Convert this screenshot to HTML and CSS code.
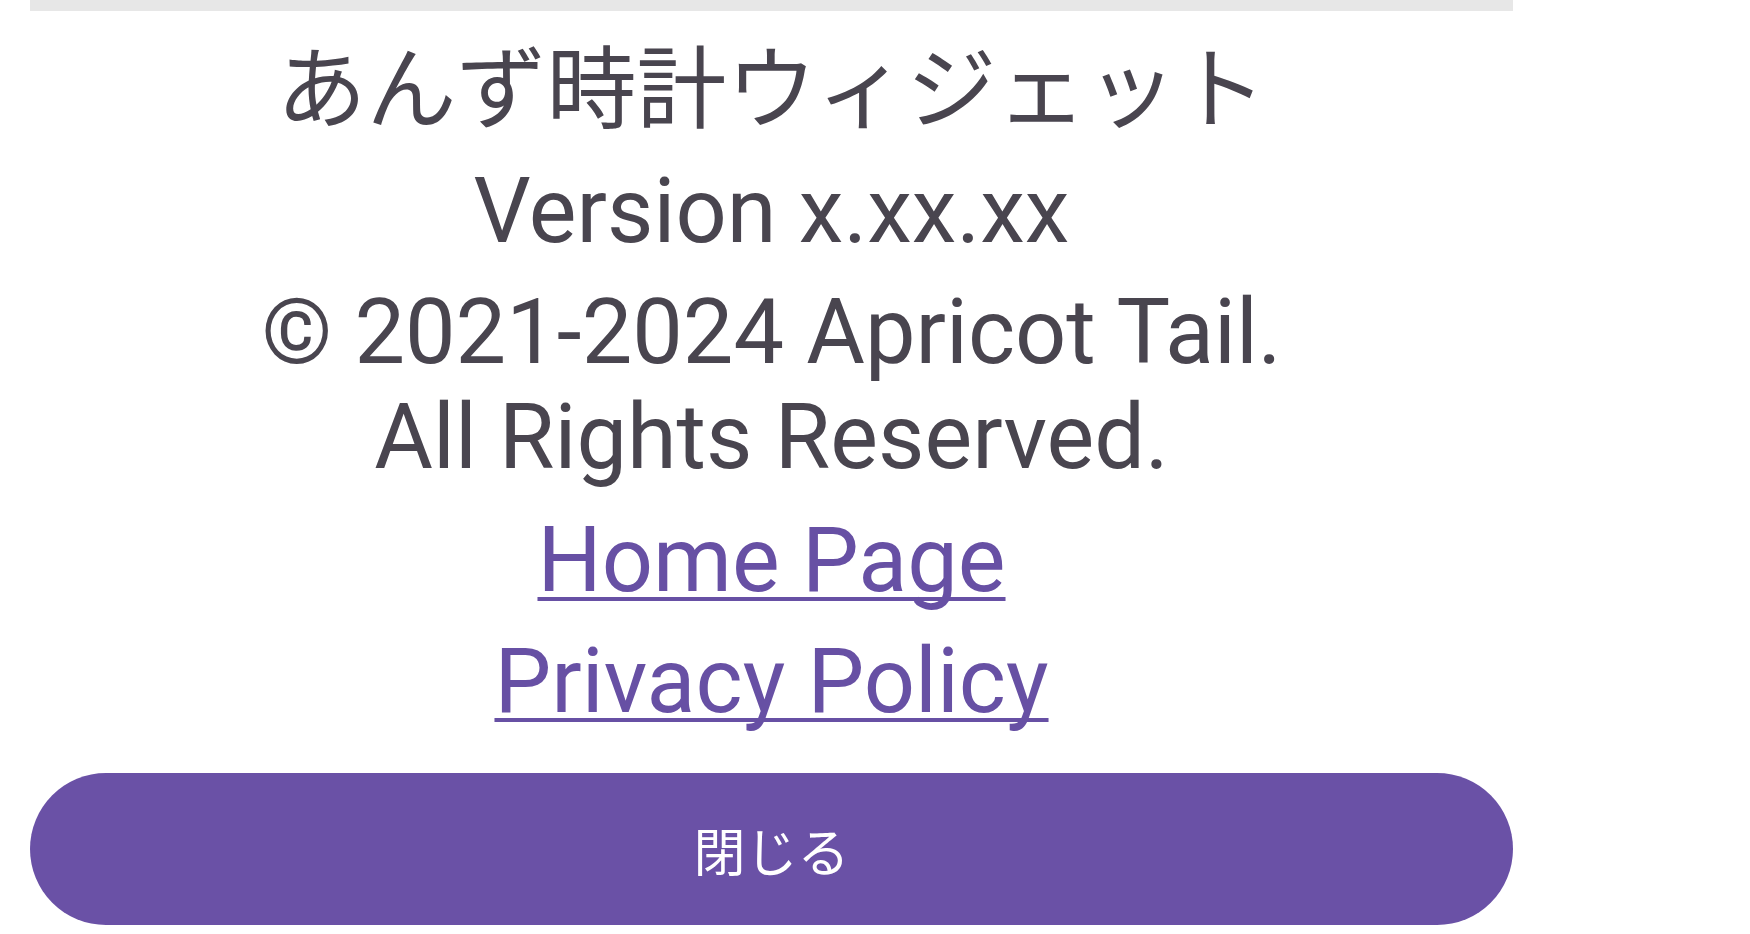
FILE: index.html
```html
<!DOCTYPE html>
<html lang="ja">
<head>
  <meta charset="UTF-8">
  <title>あんず時計ウィジェット</title>
  <link rel="stylesheet" href="styles.css">
</head>
<body>

  <div class="about-dialog">
    <div class="top-divider"></div>

    <h1 class="app-name">あんず時計ウィジェット</h1>
    <p class="version">Version x.xx.xx</p>
    <p class="copyright">© 2021-2024 Apricot Tail.<br>All Rights Reserved.</p>

    <a class="link home-link" href="#">Home Page</a>
    <a class="link policy-link" href="#">Privacy Policy</a>

    <button class="close-button">閉じる</button>
  </div>

</body>
</html>
```

FILE: styles.css
```css
body {
  margin: 0;
  background: #fff;
  font-family: Roboto, "Noto Sans", "Noto Sans CJK JP", sans-serif;
  color: #49454f;
}

.about-dialog {
  width: 1483px;
  margin-left: 30px;
  display: flex;
  flex-direction: column;
  align-items: center;
  text-align: center;
}

.top-divider {
  align-self: stretch;
  height: 11px;
  background: #e7e7e7;
}

.app-name {
  margin: 19px 0 0;
  font-family: "Noto Sans CJK JP", sans-serif;
  font-weight: 400;
  font-size: 90px;
  line-height: 105px;
}

.version,
.copyright {
  margin: 0;
  font-size: 90px;
  line-height: 105px;
}

.version {
  margin-top: 24px;
}

.copyright {
  margin-top: 16px;
}

.link {
  font-size: 90px;
  line-height: 105px;
  color: #6750a4;
  text-decoration: underline;
  text-decoration-thickness: 4px;
  text-underline-offset: 6px;
  text-decoration-skip-ink: none;
}

.home-link {
  margin-top: 18px;
}

.policy-link {
  margin-top: 16px;
}

.close-button {
  align-self: stretch;
  margin-top: 39px;
  height: 152px;
  border: none;
  border-radius: 76px;
  background: #6a51a6;
  color: #fff;
  font-family: "Noto Sans CJK JP", sans-serif;
  font-size: 52px;
  padding: 0;
  cursor: pointer;
}
```
